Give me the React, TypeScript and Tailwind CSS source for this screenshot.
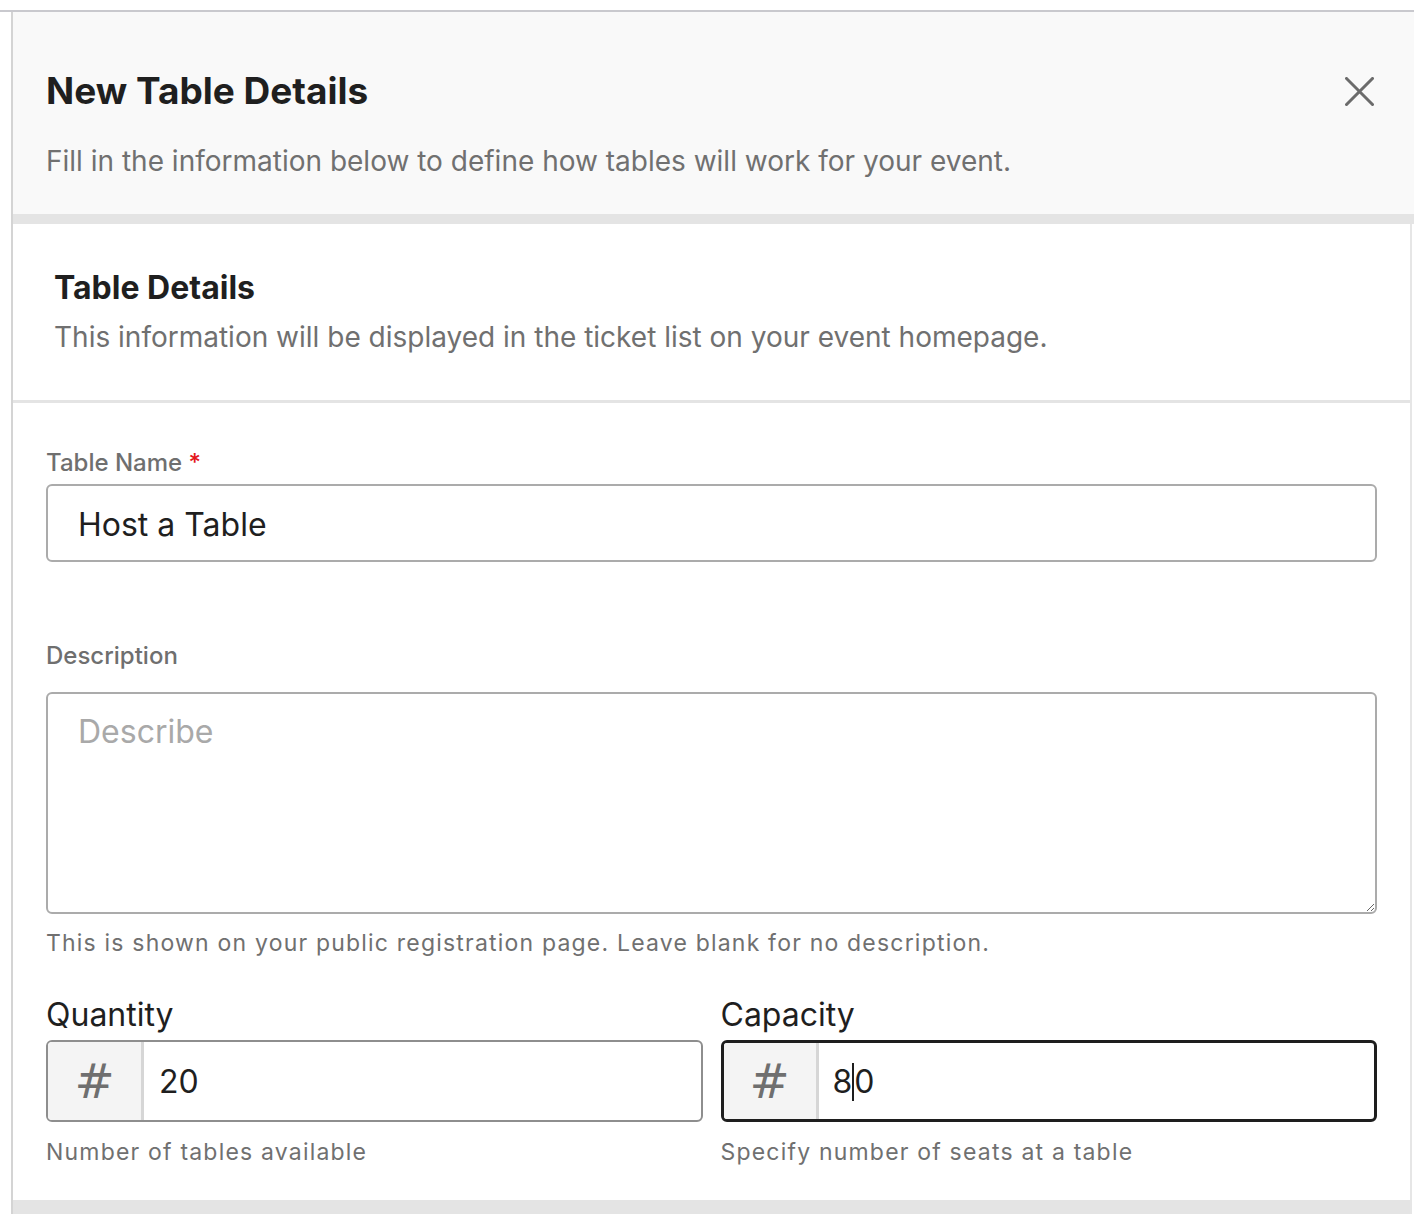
export default function App() {
    return (
        <div className="min-h-screen bg-white pt-[10px]" style={{ fontFamily: 'Inter, "Noto Sans", sans-serif' }}>
            <div className="border-t-2 border-[#c9c9ce]">
                <div className="ml-[11px] border-l-2 border-[#d4d4d4]">

                    {/* Header */}
                    <div className="bg-[#f9f9f9] pl-[33px] pr-[40px] pt-[55px] pb-[35px] border-b-[10px] border-[#e4e4e4]">
                        <div className="flex items-center justify-between">
                            <h1 className="text-[37px] leading-[48px] font-bold text-[#1f1f1f]">New Table Details</h1>
                            <svg width="29" height="29" viewBox="0 0 29 29" className="text-[#6b6b6b]">
                                <path d="M1.5 1.5 L27.5 27.5 M27.5 1.5 L1.5 27.5" stroke="currentColor" strokeWidth="3" strokeLinecap="square" />
                            </svg>
                        </div>
                        <p className="mt-[28px] text-[28px] leading-[36px] text-[#707070]">
                            Fill in the information below to define how tables will work for your event.
                        </p>
                    </div>

                    {/* Body */}
                    <div className="mr-[2px] border-r-2 border-[#e6e6e6] bg-white">

                        {/* Section heading */}
                        <div className="pl-[41px] pt-[45px] pb-[45px] border-b-[3px] border-[#e4e4e4]">
                            <h2 className="text-[32px] leading-[38px] font-bold text-[#1f1f1f]">Table Details</h2>
                            <p className="mt-[12px] text-[28px] leading-[36px] text-[#707070]">
                                This information will be displayed in the ticket list on your event homepage.
                            </p>
                        </div>

                        {/* Form */}
                        <div className="px-[33px] pt-[44px] pb-[33px]">
                            <label className="block text-[24px] leading-[32px] font-medium text-[#6f6f6f]">
                                Table Name <span className="text-[#e4161b]">*</span>
                            </label>
                            <div className="mt-[5px] h-[78px] rounded-[6px] border-2 border-[#ababab] flex items-center px-[30px] pt-[3px] text-[32px] text-[#1f1f1f]">
                                Host a Table
                            </div>

                            <label className="block mt-[78px] text-[24px] leading-[32px] font-medium text-[#6f6f6f]">
                                Description
                            </label>
                            <textarea
                                placeholder="Describe"
                                className="block mt-[20px] w-full h-[222px] rounded-[6px] border-2 border-[#ababab] px-[30px] pt-[18px] text-[32px] leading-[40px] text-[#1f1f1f] placeholder:text-[#a9a9a9] outline-none"
                            />
                            <p className="mt-[14px] text-[23px] leading-[30px] tracking-[0.052em] text-[#707070]">
                                This is shown on your public registration page. Leave blank for no description.
                            </p>

                            <div className="mt-[38px] grid grid-cols-2 gap-[18px]">
                                <div>
                                    <label className="block text-[32px] leading-[38px] text-[#1f1f1f]">Quantity</label>
                                    <div className="mt-[6px] h-[82px] rounded-[6px] border-2 border-[#8e8e8e] flex overflow-hidden">
                                        <div
                                            className="w-[96px] bg-[#f4f4f4] border-r-[3px] border-[#d6d6d6] flex items-center justify-center text-[48px] text-[#6f6f6f]"
                                            style={{ fontFamily: '"DejaVu Sans", sans-serif' }}
                                        >
                                            #
                                        </div>
                                        <div className="flex-1 flex items-center pl-[15px] pt-[2px] text-[32px] text-[#1f1f1f]">20</div>
                                    </div>
                                    <p className="mt-[15px] text-[23px] leading-[30px] tracking-[0.052em] text-[#707070]">
                                        Number of tables available
                                    </p>
                                </div>
                                <div>
                                    <label className="block text-[32px] leading-[38px] text-[#1f1f1f]">Capacity</label>
                                    <div className="mt-[6px] h-[82px] rounded-[6px] border-[3px] border-[#1e1e1e] flex overflow-hidden">
                                        <div
                                            className="w-[95px] bg-[#f4f4f4] border-r-[3px] border-[#d6d6d6] flex items-center justify-center text-[48px] text-[#6f6f6f]"
                                            style={{ fontFamily: '"DejaVu Sans", sans-serif' }}
                                        >
                                            #
                                        </div>
                                        <div className="flex-1 flex items-center pl-[14px] pt-[2px] text-[32px] text-[#1f1f1f]">
                                            8<span className="inline-block w-[2px] h-[38px] bg-[#1e1e1e]" />0
                                        </div>
                                    </div>
                                    <p className="mt-[15px] text-[23px] leading-[30px] tracking-[0.052em] text-[#707070]">
                                        Specify number of seats at a table
                                    </p>
                                </div>
                            </div>
                        </div>

                        <div className="h-[14px] bg-[#e4e4e4]" />
                    </div>
                </div>
            </div>
        </div>
    )
}
